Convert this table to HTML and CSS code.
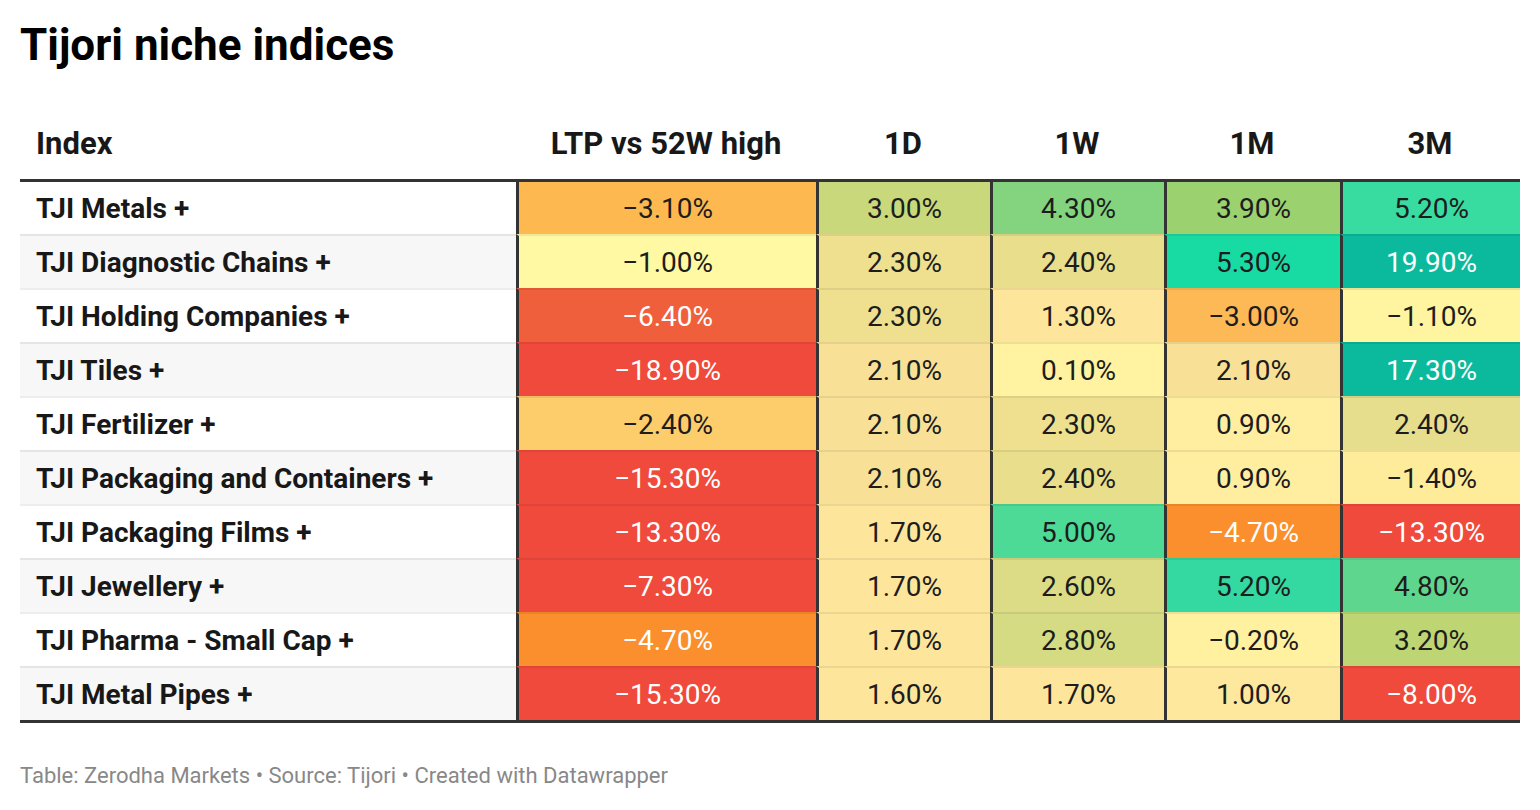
FILE: index.html
```html
<!DOCTYPE html>
<html lang="en">
<head>
<meta charset="utf-8">
<title>Tijori niche indices</title>
<link rel="stylesheet" href="styles.css">
</head>
<body>
<div class="chart">
  <h1 class="title">Tijori niche indices</h1>
  <table class="tbl">
    <colgroup>
      <col class="c-index">
      <col class="c-ltp">
      <col class="c-1d">
      <col class="c-1w">
      <col class="c-1m">
      <col class="c-3m">
    </colgroup>
    <thead>
      <tr>
        <th class="h-left">Index</th>
        <th>LTP vs 52W high</th>
        <th>1D</th>
        <th>1W</th>
        <th>1M</th>
        <th>3M</th>
      </tr>
    </thead>
    <tbody>
      <tr>
        <td class="name">TJI Metals +</td>
        <td class="v" style="background:#fdb94f">−3.10%</td>
        <td class="v" style="background:#c8d87a">3.00%</td>
        <td class="v" style="background:#84d47f">4.30%</td>
        <td class="v" style="background:#9bd16f">3.90%</td>
        <td class="v" style="background:#38dba0">5.20%</td>
      </tr>
      <tr>
        <td class="name">TJI Diagnostic Chains +</td>
        <td class="v" style="background:#fff9a3">−1.00%</td>
        <td class="v" style="background:#eee08f">2.30%</td>
        <td class="v" style="background:#e8de8c">2.40%</td>
        <td class="v" style="background:#18dba4">5.30%</td>
        <td class="v light" style="background:#0bba9c">19.90%</td>
      </tr>
      <tr>
        <td class="name">TJI Holding Companies +</td>
        <td class="v light" style="background:#f05f3b">−6.40%</td>
        <td class="v" style="background:#eee08f">2.30%</td>
        <td class="v" style="background:#fee59c">1.30%</td>
        <td class="v" style="background:#fdb956">−3.00%</td>
        <td class="v" style="background:#fff49f">−1.10%</td>
      </tr>
      <tr>
        <td class="name">TJI Tiles +</td>
        <td class="v light" style="background:#ef4a3c">−18.90%</td>
        <td class="v" style="background:#f8e197">2.10%</td>
        <td class="v" style="background:#fff2a1">0.10%</td>
        <td class="v" style="background:#f8e197">2.10%</td>
        <td class="v light" style="background:#0bba9c">17.30%</td>
      </tr>
      <tr>
        <td class="name">TJI Fertilizer +</td>
        <td class="v" style="background:#fecd6b">−2.40%</td>
        <td class="v" style="background:#f8e197">2.10%</td>
        <td class="v" style="background:#eee08f">2.30%</td>
        <td class="v" style="background:#ffeea0">0.90%</td>
        <td class="v" style="background:#e6dd8d">2.40%</td>
      </tr>
      <tr>
        <td class="name">TJI Packaging and Containers +</td>
        <td class="v light" style="background:#ef4a3c">−15.30%</td>
        <td class="v" style="background:#f8e197">2.10%</td>
        <td class="v" style="background:#e8de8c">2.40%</td>
        <td class="v" style="background:#ffeea0">0.90%</td>
        <td class="v" style="background:#ffec9b">−1.40%</td>
      </tr>
      <tr>
        <td class="name">TJI Packaging Films +</td>
        <td class="v light" style="background:#ef4a3c">−13.30%</td>
        <td class="v" style="background:#fee59c">1.70%</td>
        <td class="v" style="background:#4dd996">5.00%</td>
        <td class="v light" style="background:#fb8e2d">−4.70%</td>
        <td class="v light" style="background:#ef4a3c">−13.30%</td>
      </tr>
      <tr>
        <td class="name">TJI Jewellery +</td>
        <td class="v light" style="background:#ef4a3c">−7.30%</td>
        <td class="v" style="background:#fee59c">1.70%</td>
        <td class="v" style="background:#dcdc86">2.60%</td>
        <td class="v" style="background:#33d9a0">5.20%</td>
        <td class="v" style="background:#5fd68e">4.80%</td>
      </tr>
      <tr>
        <td class="name">TJI Pharma - Small Cap +</td>
        <td class="v light" style="background:#fb8e2d">−4.70%</td>
        <td class="v" style="background:#fee59c">1.70%</td>
        <td class="v" style="background:#d4db82">2.80%</td>
        <td class="v" style="background:#fff1a0">−0.20%</td>
        <td class="v" style="background:#bdd573">3.20%</td>
      </tr>
      <tr>
        <td class="name">TJI Metal Pipes +</td>
        <td class="v light" style="background:#ef4a3c">−15.30%</td>
        <td class="v" style="background:#fee59c">1.60%</td>
        <td class="v" style="background:#fee59c">1.70%</td>
        <td class="v" style="background:#fee89d">1.00%</td>
        <td class="v light" style="background:#ef4a3c">−8.00%</td>
      </tr>
    </tbody>
  </table>
  <p class="footer">Table: Zerodha Markets • Source: Tijori • Created with Datawrapper</p>
</div>
</body>
</html>
```

FILE: styles.css
```css
html, body {
  margin: 0;
  padding: 0;
  background: #ffffff;
}

body {
  font-family: Roboto, "Liberation Sans", Arial, sans-serif;
  color: #1d1d1d;
}

.chart {
  padding: 19px 20px 0 20px;
}

.title {
  margin: 0;
  font-size: 44px;
  line-height: 52px;
  font-weight: 700;
  color: #000000;
}

.tbl {
  margin-top: 36px;
  width: 1500px;
  table-layout: fixed;
  border-collapse: separate;
  border-spacing: 0;
  font-size: 28px;
}

.c-index { width: 496px; }
.c-ltp { width: 300px; }
.c-1d { width: 174px; }
.c-1w { width: 174px; }
.c-1m { width: 176px; }
.c-3m { width: 180px; }

.tbl th {
  height: 72px;
  padding: 0;
  font-weight: 700;
  font-size: 31px;
  text-align: center;
  vertical-align: middle;
  color: #181818;
  border-bottom: 3px solid #333333;
}

.tbl th.h-left {
  text-align: left;
  padding-left: 16px;
}

.tbl td {
  height: 52px;
  padding: 0;
  border-top: 2px solid rgba(0, 0, 0, 0.07);
  vertical-align: middle;
}

.tbl tbody tr:first-child td {
  border-top: none;
}

.tbl tbody tr:last-child td {
  border-bottom: 3px solid #333333;
}

.tbl td.name {
  padding-left: 16px;
  font-weight: 700;
  font-size: 28px;
  color: #181818;
  background: #ffffff;
  white-space: nowrap;
}

.tbl tbody tr:nth-child(even) td.name {
  background: #f7f7f7;
}

.tbl td.v {
  text-align: center;
  font-weight: 400;
  color: #1d1d1d;
  border-left: 3px solid #333333;
}

.tbl td.v.light {
  color: #ffffff;
}

.footer {
  margin: 40px 0 0 0;
  font-size: 22px;
  line-height: 26px;
  color: #888888;
}
```
